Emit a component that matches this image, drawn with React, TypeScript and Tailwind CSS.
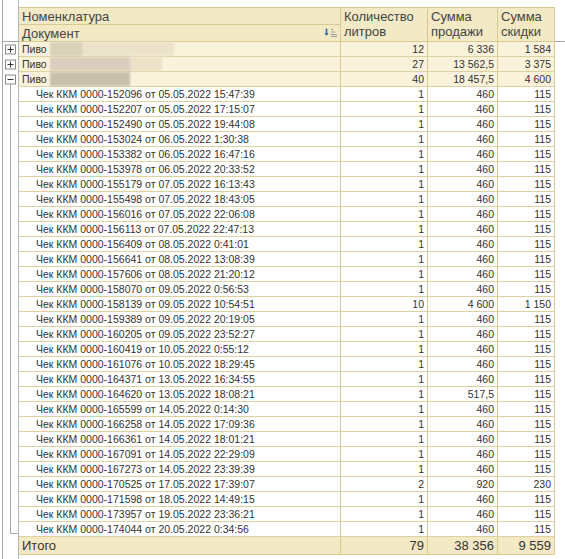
import React from "react";

type Doc = { num: string; date: string; qty: string; sum: string; disc: string };

const raw: [string, string, string?, string?, string?][] = [
  ["152096", "05.05.2022 15:47:39"],
  ["152207", "05.05.2022 17:15:07"],
  ["152490", "05.05.2022 19:44:08"],
  ["153024", "06.05.2022 1:30:38"],
  ["153382", "06.05.2022 16:47:16"],
  ["153978", "06.05.2022 20:33:52"],
  ["155179", "07.05.2022 16:13:43"],
  ["155498", "07.05.2022 18:43:05"],
  ["156016", "07.05.2022 22:06:08"],
  ["156113", "07.05.2022 22:47:13"],
  ["156409", "08.05.2022 0:41:01"],
  ["156641", "08.05.2022 13:08:39"],
  ["157606", "08.05.2022 21:20:12"],
  ["158070", "09.05.2022 0:56:53"],
  ["158139", "09.05.2022 10:54:51", "10", "4 600", "1 150"],
  ["159389", "09.05.2022 20:19:05"],
  ["160205", "09.05.2022 23:52:27"],
  ["160419", "10.05.2022 0:55:12"],
  ["161076", "10.05.2022 18:29:45"],
  ["164371", "13.05.2022 16:34:55"],
  ["164620", "13.05.2022 18:08:21", "1", "517,5", "115"],
  ["165599", "14.05.2022 0:14:30"],
  ["166258", "14.05.2022 17:09:36"],
  ["166361", "14.05.2022 18:01:21"],
  ["167091", "14.05.2022 22:29:09"],
  ["167273", "14.05.2022 23:39:39"],
  ["170525", "17.05.2022 17:39:07", "2", "920", "230"],
  ["171598", "18.05.2022 14:49:15"],
  ["173957", "19.05.2022 23:36:21"],
  ["174044", "20.05.2022 0:34:56"],
];

const docs: Doc[] = raw.map(([num, date, qty, sum, disc]) => ({
  num,
  date,
  qty: qty ?? "1",
  sum: sum ?? "460",
  disc: disc ?? "115",
}));

const groups = [
  { qty: "12", sum: "6 336", disc: "1 584", blur: "w-[124px]", dark: "w-[32px]" },
  { qty: "27", sum: "13 562,5", disc: "3 375", blur: "w-[112px]", dark: "w-[80px]" },
  { qty: "40", sum: "18 457,5", disc: "4 600", blur: "w-[80px]", dark: "w-[80px]" },
];

// дерево группировок слева
function Gutter() {
  const boxes = [49.5, 64.5, 79.5];
  return (
    <svg width="19" height="559" className="shrink-0 block">
      <line x1="2.5" y1="0" x2="2.5" y2="559" stroke="#a8a8a8" />
      <line x1="18.5" y1="0" x2="18.5" y2="559" stroke="#b8b8b8" />
      <line x1="2.5" y1="41.5" x2="18.5" y2="41.5" stroke="#a8a8a8" />
      <line x1="10.5" y1="84" x2="10.5" y2="533.5" stroke="#a8a8a8" />
      <line x1="10.5" y1="533.5" x2="18" y2="533.5" stroke="#a8a8a8" />
      {boxes.map((y, i) => (
        <g key={i}>
          <rect x="5.5" y={y - 4.5} width="10" height="9" fill="#fff" stroke="#8a8a8a" />
          <line x1="7.5" y1={y} x2="13.5" y2={y} stroke="#333" />
          {i < 2 && <line x1="10.5" y1={y - 3} x2="10.5" y2={y + 3} stroke="#333" />}
        </g>
      ))}
    </svg>
  );
}

function SortIcon() {
  return (
    <svg width="13" height="9" viewBox="0 0 13 9" className="mb-[1px]">
      <path d="M2.5 0.5 V6.5" stroke="#2f6fb8" strokeWidth="1.6" />
      <path d="M0.5 5 L2.5 8 L4.5 5 Z" fill="#2f6fb8" />
      <path d="M7 1.5 H9 M7 4 H11 M7 6.5 H13 M7 8.5 H13" stroke="#9a9a9a" />
    </svg>
  );
}

const num = "flex justify-end items-center pr-[3px] border-r border-[#d6c992]";

export default function App() {
  return (
    <div
      className="w-[565px] h-[559px] bg-white flex text-[#333] overflow-hidden"
      style={{ fontFamily: '"Liberation Sans", Arial, sans-serif' }}
    >
      <Gutter />
      <div className="w-[536px] shrink-0 flex flex-col pt-[7px]">
        {/* шапка */}
        <div className="flex h-[35px] bg-[#f3e9c5] border-y border-[#d6c992] text-[13px] leading-[15px] text-[#444]">
          <div className="w-[322px] border-r border-[#d6c992] flex flex-col">
            <div className="h-[17px] border-b border-[#d6c992] pl-[3px] pt-[1px]">Номенклатура</div>
            <div className="flex-1 flex items-center justify-between pl-[3px] pr-[3px]">
              <span>Документ</span>
              <SortIcon />
            </div>
          </div>
          <div className="w-[87px] border-r border-[#d6c992] pl-[3px] pt-[1px]">
            Количество
            <br />
            литров
          </div>
          <div className="w-[70px] border-r border-[#d6c992] pl-[3px] pt-[1px]">
            Сумма
            <br />
            продажи
          </div>
          <div className="w-[57px] border-r border-[#d6c992] pl-[3px] pt-[1px]">
            Сумма
            <br />
            скидки
          </div>
        </div>

        {/* строки */}
        <div className="text-[10.5px] leading-[14px]">
          {groups.map((g, i) => (
            <div key={i} className="flex h-[15px] bg-[#faf2da] border-b border-[#ddd1a2]">
              <div className="w-[322px] border-r border-[#d6c992] flex items-center pl-[3px]">
                <span className="w-[28px]">Пиво</span>
                <div className={`h-[14px] flex ${g.blur} bg-[#ece2c8] blur-[1px]`}>
                  <div className={`h-full ${g.dark} ${i === 0 ? "bg-[#d9d0b9]" : i === 1 ? "bg-[#dcccbd]" : "bg-[#c9bfaa]"}`} />
                </div>
              </div>
              <div className={`w-[87px] ${num}`}>{g.qty}</div>
              <div className={`w-[70px] ${num}`}>{g.sum}</div>
              <div className={`w-[57px] ${num}`}>{g.disc}</div>
            </div>
          ))}
          {docs.map((d) => (
            <div key={d.num} className="flex h-[15px] bg-white border-b border-[#ddd1a2]">
              <div className="w-[322px] border-r border-[#d6c992] flex items-center pl-[17px] whitespace-nowrap">
                Чек ККМ 0000-{d.num} от {d.date}
              </div>
              <div className={`w-[87px] ${num}`}>{d.qty}</div>
              <div className={`w-[70px] ${num}`}>{d.sum}</div>
              <div className={`w-[57px] ${num}`}>{d.disc}</div>
            </div>
          ))}
        </div>

        {/* итог */}
        <div className="flex h-[18px] bg-[#f3e9c5] border-b border-[#d6c992] text-[13px] leading-[15px]">
          <div className="w-[322px] border-r border-[#d6c992] flex items-center pl-[3px]">Итого</div>
          <div className={`w-[87px] ${num}`}>79</div>
          <div className={`w-[70px] ${num}`}>38 356</div>
          <div className={`w-[57px] ${num}`}>9 559</div>
        </div>
      </div>
      <div className="flex-1 pt-[41px]">
        <div className="h-px bg-[#a8a8a8]" />
      </div>
    </div>
  );
}
